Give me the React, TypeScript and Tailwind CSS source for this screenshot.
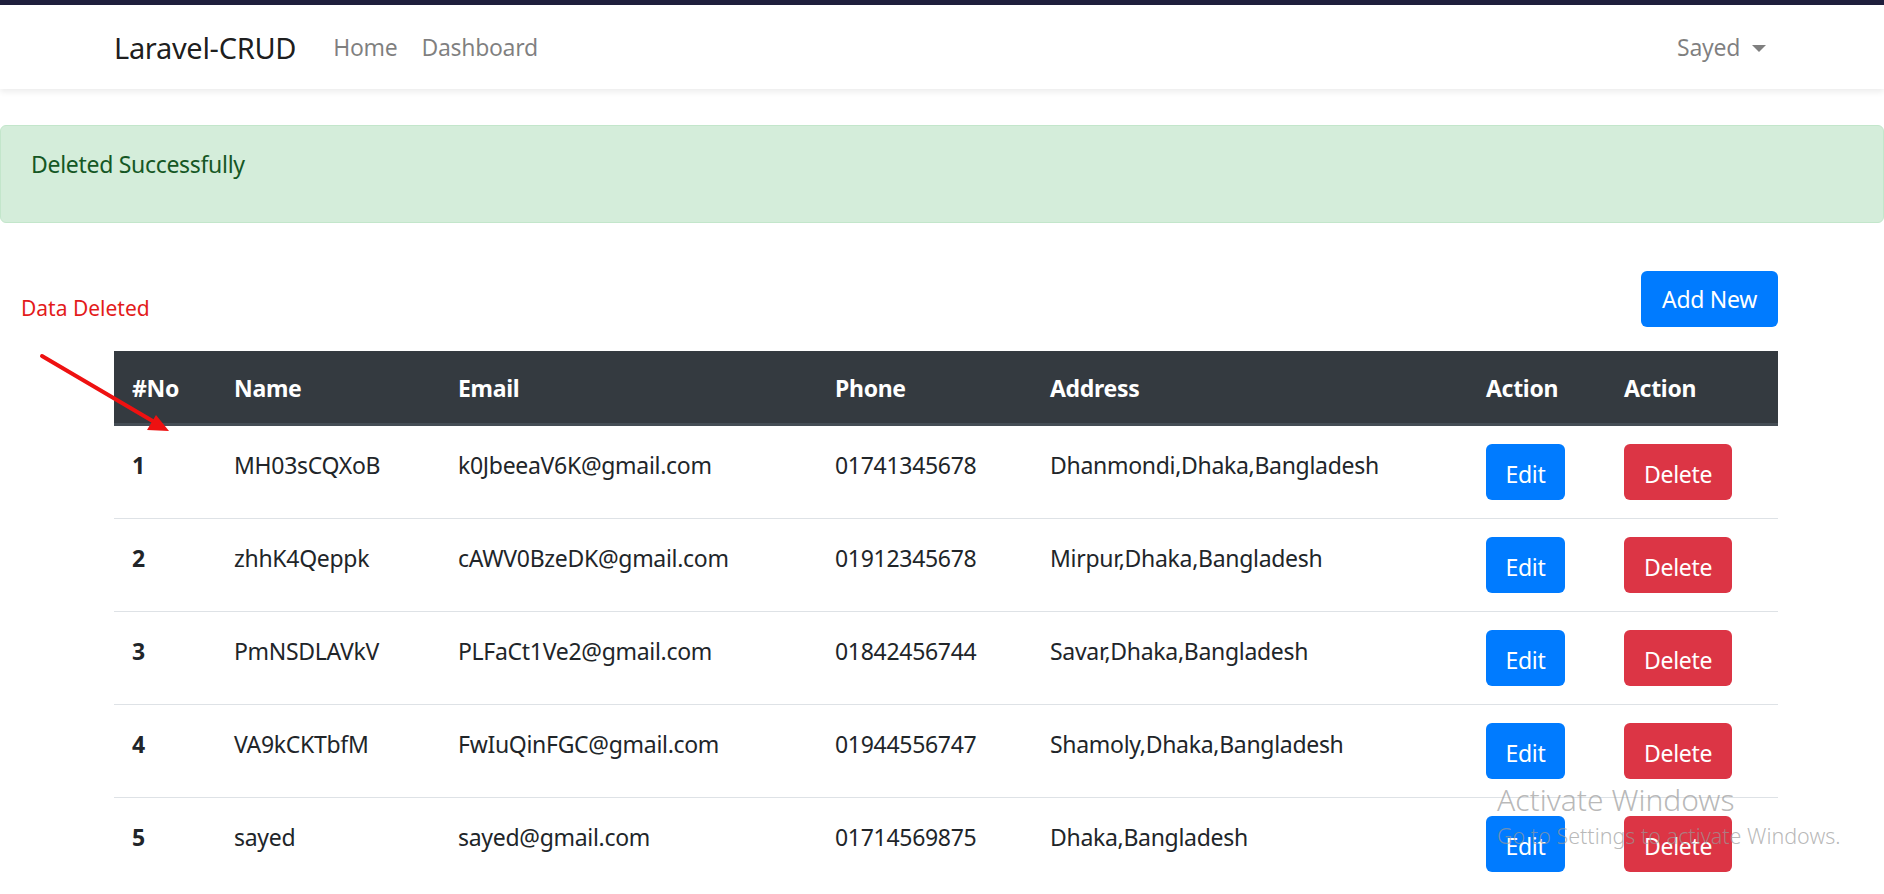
import React from 'react';

const rows = [
    { id: 1, name: 'MH03sCQXoB', email: 'k0JbeeaV6K@gmail.com', phone: '01741345678', address: 'Dhanmondi,Dhaka,Bangladesh' },
    { id: 2, name: 'zhhK4Qeppk', email: 'cAWV0BzeDK@gmail.com', phone: '01912345678', address: 'Mirpur,Dhaka,Bangladesh' },
    { id: 3, name: 'PmNSDLAVkV', email: 'PLFaCt1Ve2@gmail.com', phone: '01842456744', address: 'Savar,Dhaka,Bangladesh' },
    { id: 4, name: 'VA9kCKTbfM', email: 'FwIuQinFGC@gmail.com', phone: '01944556747', address: 'Shamoly,Dhaka,Bangladesh' },
    { id: 5, name: 'sayed', email: 'sayed@gmail.com', phone: '01714569875', address: 'Dhaka,Bangladesh' },
];

const cols = [
    { label: '#No', w: 'w-[102px]' },
    { label: 'Name', w: 'w-[224px]' },
    { label: 'Email', w: 'w-[377px]' },
    { label: 'Phone', w: 'w-[215px]' },
    { label: 'Address', w: 'w-[436px]' },
    { label: 'Action', w: 'w-[138px]' },
    { label: 'Action', w: 'w-[172px]' },
];

export default function App() {
    return (
        <div className="relative min-h-screen bg-white text-[#212529] font-['Segoe_UI','Noto_Sans',sans-serif] text-[23px] leading-[36px] tracking-[-0.3px] overflow-hidden">
            <div className="h-[5px] bg-[#1f1f3d]" />

            {/* Navbar */}
            <nav className="h-[84px] bg-white shadow-[0_3px_6px_rgba(0,0,0,0.075)] relative z-10 pl-[8px]">
                <div className="mx-auto w-[1664px] h-full flex items-center justify-between">
                    <div className="flex items-center">
                        <a className="text-[29px] leading-[45px] text-[#000000e6] mr-[25px]">Laravel-CRUD</a>
                        <a className="px-[12px] text-[#00000080]">Home</a>
                        <a className="px-[12px] text-[#00000080]">Dashboard</a>
                    </div>
                    <div className="flex items-center gap-[12px] px-[12px] text-[#00000080]">
                        Sayed
                        <span className="w-0 h-0 border-x-[7px] border-x-transparent border-t-[7px] border-t-[#00000080] mt-[2px]" />
                    </div>
                </div>
            </nav>

            <main className="pt-[36px]">
                {/* Alert */}
                <div className="bg-[#d4edda] border border-[#c3e6cb] rounded-[6px] text-[#155724] px-[30px] pt-[20px] pb-[16px]">
                    <p className="mb-[24px]">Deleted Successfully</p>
                </div>

                <div className="pl-[8px] mt-[48px]">
                    <div className="mx-auto w-[1664px]">
                        <div className="flex justify-end mb-[24px]">
                            <button className="h-[56px] px-[21px] rounded-[6px] bg-[#007bff] text-white">Add New</button>
                        </div>

                        <table className="w-full border-collapse table-fixed">
                            <thead>
                                <tr className="bg-[#343a40] text-white">
                                    {cols.map((c, i) => (
                                        <th key={i} className={`${c.w} text-left font-bold px-[18px] pt-[19px] pb-[17px] border-b-[3px] border-[#454d55]`}>
                                            {c.label}
                                        </th>
                                    ))}
                                </tr>
                            </thead>
                            <tbody>
                                {rows.map((r, i) => {
                                    const line = i > 0 ? 'border-t border-[#dee2e6]' : '';
                                    return (
                                        <tr key={r.id} className="align-top">
                                            <th className={`text-left font-bold px-[18px] pt-[21px] ${line}`}>{r.id}</th>
                                            <td className={`px-[18px] pt-[21px] ${line}`}>{r.name}</td>
                                            <td className={`px-[18px] pt-[21px] ${line}`}>{r.email}</td>
                                            <td className={`px-[18px] pt-[21px] ${line}`}>{r.phone}</td>
                                            <td className={`px-[18px] pt-[21px] ${line}`}>{r.address}</td>
                                            <td className={`px-[18px] py-[18px] ${line}`}>
                                                <button className="h-[56px] px-[19.5px] pt-[3px] rounded-[6px] bg-[#007bff] text-white">Edit</button>
                                            </td>
                                            <td className={`px-[18px] py-[18px] ${line}`}>
                                                <button className="h-[56px] px-[20px] pt-[3px] rounded-[6px] bg-[#dc3545] text-white">Delete</button>
                                            </td>
                                        </tr>
                                    );
                                })}
                            </tbody>
                        </table>
                    </div>
                </div>
            </main>

            {/* Annotation drawn over the screenshot */}
            <span className="absolute left-[21px] top-[294px] text-[21px] leading-[28px] tracking-normal text-[#e31b1b]">Data Deleted</span>
            <svg className="absolute left-0 top-0 pointer-events-none" width="200" height="460" viewBox="0 0 200 460">
                <line x1="42" y1="356" x2="156" y2="423" stroke="#ee1111" strokeWidth="4" strokeLinecap="round" />
                <polygon points="169,431 147,430 156,415" fill="#ee1111" />
            </svg>

            {/* Windows watermark */}
            <div className="absolute left-[1497px] top-[780px] pointer-events-none text-[#9a9a9a]/70 tracking-normal">
                <div className="text-[30px] leading-[40px] font-light">Activate Windows</div>
                <div className="text-[21.5px] leading-[28px] font-light mt-[2px]">Go to Settings to activate Windows.</div>
            </div>
        </div>
    );
}
